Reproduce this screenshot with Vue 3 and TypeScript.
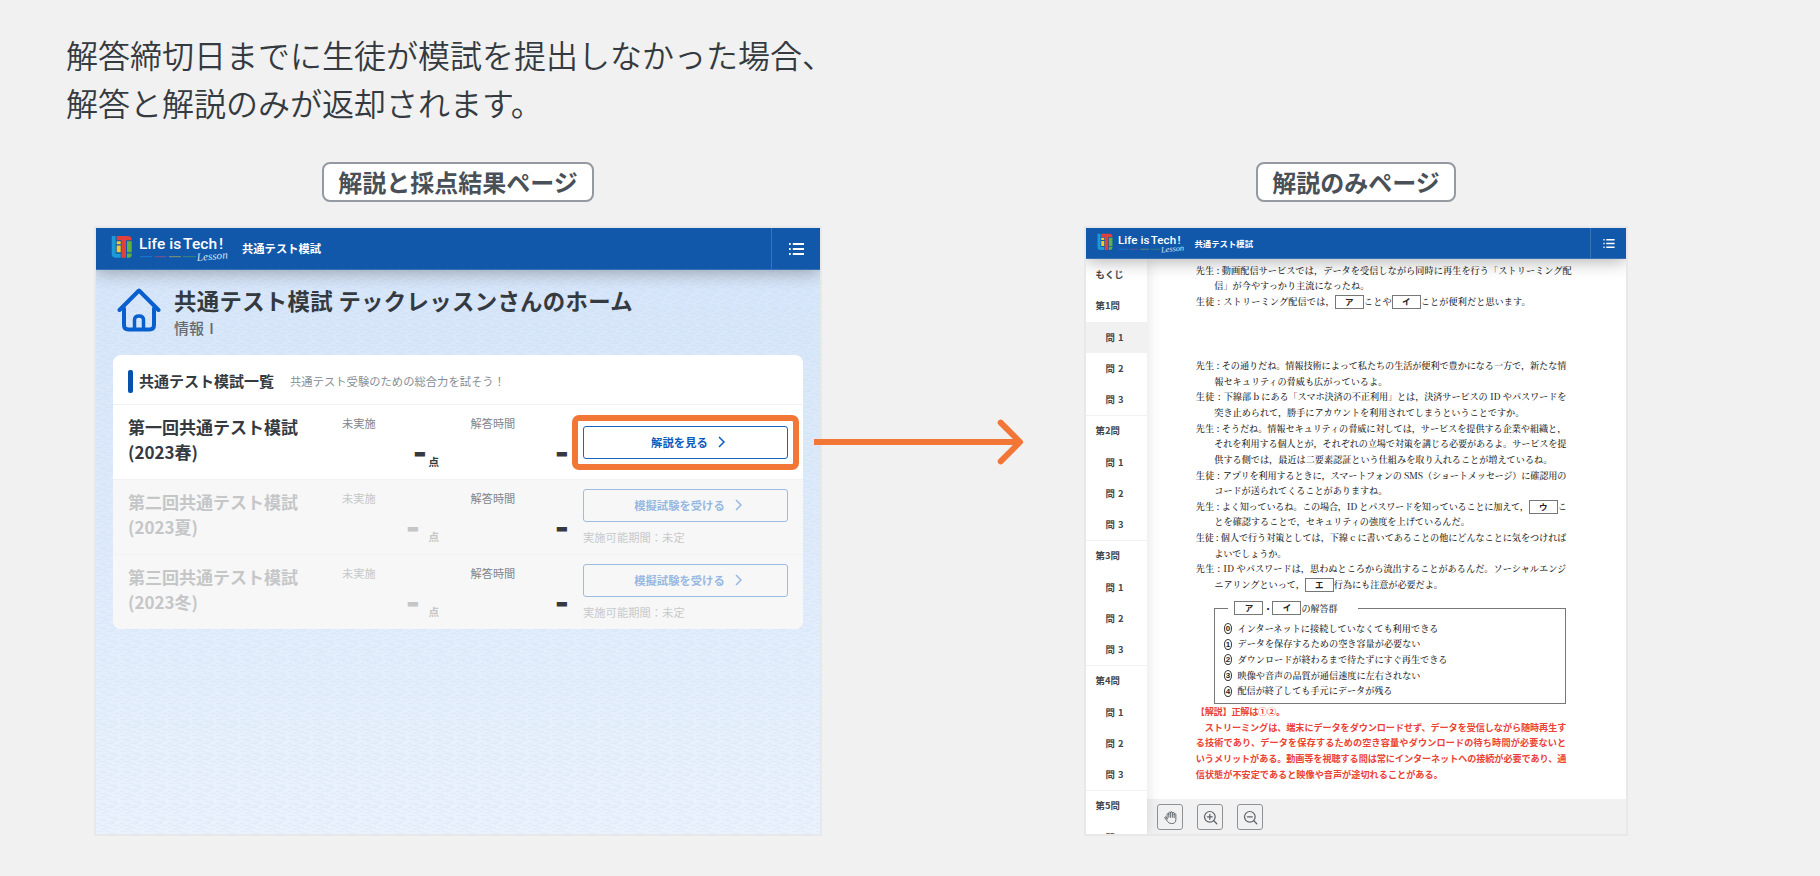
<script setup lang="ts">
interface Seg { t: string; w: number; blank?: boolean }
interface Line { pad: number; segs: Seg[] }

const fit = (el: HTMLElement, width: number) => {
  el.style.letterSpacing = '0px'
  const natural = el.getBoundingClientRect().width
  const count = Array.from(el.textContent ?? '').length
  if (count > 0) el.style.letterSpacing = `${(width - natural) / count}px`
}
const vFit = {
  mounted: (el: HTMLElement, binding: { value: number }) => fit(el, binding.value),
}

const s = (t: string, w: number): Seg => ({ t, w })
const b = (t: string): Seg => ({ t, w: 29, blank: true })
const full = (who: string, gap: number, t: string, w: number): Line => ({ pad: 0, segs: [s(who + ' : ', gap), s(t, w)] })
const cont = (t: string, w: number): Line => ({ pad: 18.5, segs: [s(t, w)] })

const intro: Line[] = [
  full('先生', 26, '動画配信サービスでは，データを受信しながら同時に再生を行う「ストリーミング配', 350),
  cont('信」が今やすっかり主流になったね。', 155),
  { pad: 0, segs: [s('生徒 : ', 27.5), s('ストリーミング配信では，', 111.5), b('ア'), s('ことや', 28), b('イ'), s('ことが便利だと思います。', 110)] },
]
const talk: Line[] = [
  full('先生', 26, 'その通りだね。情報技術によって私たちの生活が便利で豊かになる一方で，新たな情', 344.5),
  cont('報セキュリティの脅威も広がっているよ。', 173),
  full('生徒', 28, '下線部 b にある「スマホ決済の不正利用」とは，決済サービスの ID やパスワードを', 342.5),
  cont('突き止められて，勝手にアカウントを利用されてしまうということですか。', 310),
  full('先生', 26, 'そうだね。情報セキュリティの脅威に対しては，サービスを提供する企業や組織と，', 344.5),
  cont('それを利用する個人とが，それぞれの立場で対策を講じる必要があるよ。サービスを提', 352),
  cont('供する側では，最近は二要素認証という仕組みを取り入れることが増えているね。', 338),
  full('生徒', 27, 'アプリを利用するときに，スマートフォンの SMS（ショートメッセージ）に確認用の', 343.5),
  cont('コードが送られてくることがありますね。', 173),
  { pad: 0, segs: [s('先生 : ', 26), s('よく知っているね。この場合，ID とパスワードを知っていることに加えて，', 307), b('ウ'), s('こ', 8.5)] },
  cont('とを確認することで，セキュリティの強度を上げているんだ。', 255.5),
  full('生徒', 25, '個人で行う対策としては，下線 c に書いてあることの他にどんなことに気をつければ', 345.5),
  cont('よいでしょうか。', 72),
  full('先生', 27.5, 'ID やパスワードは，思わぬところから流出することがあるんだ。ソーシャルエンジ', 343),
  { pad: 18.5, segs: [s('ニアリングといって，', 90.5), b('エ'), s('行為にも注意が必要だよ。', 109)] },
]
const options: Seg[] = [
  s('インターネットに接続していなくても利用できる', 201),
  s('データを保存するための空き容量が必要ない', 183),
  s('ダウンロードが終わるまで待たずにすぐ再生できる', 210),
  s('映像や音声の品質が通信速度に左右されない', 183),
  s('配信が終了しても手元にデータが残る', 155),
]
const notes: Line[] = [
  { pad: 0, segs: [s('【解説】正解は①②。', 89)] },
  { pad: 9, segs: [s('ストリーミングは、端末にデータをダウンロードせず、データを受信しながら随時再生す', 361.5)] },
  { pad: 0, segs: [s('る技術であり、データを保存するための空き容量やダウンロードの待ち時間が必要ないと', 370.5)] },
  { pad: 0, segs: [s('いうメリットがある。動画等を視聴する間は常にインターネットへの接続が必要であり、通', 370.5)] },
  { pad: 0, segs: [s('信状態が不安定であると映像や音声が途切れることがある。', 247)] },
]
const sections = [
  { n: 1, q: 3 },
  { n: 2, q: 3 },
  { n: 3, q: 3 },
  { n: 4, q: 3 },
  { n: 5, q: 1 },
]
const exams = [
  { name: '第一回共通テスト模試', term: '(2023春)', open: true, action: '解説を見る', w: 57 },
  { name: '第二回共通テスト模試', term: '(2023夏)', open: false, action: '模擬試験を受ける', w: 90.5 },
  { name: '第三回共通テスト模試', term: '(2023冬)', open: false, action: '模擬試験を受ける', w: 90.5 },
]
const windows = ['home', 'paper']
</script>

<template>
  <main class="slide">
    <p class="lead">解答締切日までに生徒が模試を提出しなかった場合、<br />解答と解説のみが返却されます。</p>

    <div class="stage">
      <section v-for="kind in windows" :key="kind" class="column" :class="kind">
        <h2 class="badge">{{ kind === 'home' ? '解説と採点結果ページ' : '解説のみページ' }}</h2>
        <div class="window">
          <header class="bar">
            <svg class="brand" viewBox="0 0 120 28">
              <path d="M.7 1h4v17.700h5v4H4.700q-4 0-4-4z" fill="#1b9ad6" />
              <path d="M5.700 1h11q4 0 4 4.300H15v17.400h-4.500V5.300H5.700z" fill="#e2403a" />
              <path d="M5.700 6.300h4v3h-4zM5.700 10.500h4v6.800h-4z" fill="#f6c927" />
              <path d="M16 6.300h4.700v11H16zM16 18.500h4.700v1q0 3.200-3.200 3.200H16z" fill="#5fb23c" />
              <text x="28" y="14" class="brand-name" textLength="84" lengthAdjust="spacing">Life is&#8202;Tech&#8202;!</text>
              <path d="M29 21.700h12" stroke="#1b7fd2" stroke-width=".9" />
              <path d="M43.500 21.700h12" stroke="#8d4f82" stroke-width=".9" />
              <path d="M58 21.700h12" stroke="#8f9d63" stroke-width=".9" />
              <path d="M72 21.700h13" stroke="#3f8f6b" stroke-width=".9" />
              <text x="86" y="26" class="brand-sub" textLength="31" lengthAdjust="spacingAndGlyphs" transform="rotate(-5 86 25)">Lesson</text>
            </svg>
            <span class="service">共通テスト模試</span>
            <span class="menu">
              <svg viewBox="0 0 15 12"><path d="M0 1h1.700M0 6h1.700M0 11h1.700M3.800 1H15M3.800 6H15M3.800 11H15" stroke="#fff" stroke-width="1.900" /></svg>
            </span>
          </header>

          <div v-if="kind === 'home'" class="home-body">
            <svg class="texture" width="100%" height="100%">
              <defs>
                <pattern id="waves" width="24" height="16" patternUnits="userSpaceOnUse">
                  <path d="M0 1.500h7M9 1.500h4M12 3.500h9M2 5.500h8M18 5.500h5M6 7.500h5M13 7.500h6M0 9.500h4M10 9.500h8M3 11.500h7M19 11.500h5M0 13.500h3M9 13.500h7M5 15.500h6M17 15.500h5" stroke="#b9d3f2" stroke-width="1.400" opacity=".22" />
                </pattern>
              </defs>
              <rect width="100%" height="100%" fill="url(#waves)" />
            </svg>
            <div class="hero">
              <svg class="house" viewBox="0 0 44 44" fill="none" stroke="#0860d0" stroke-width="4" stroke-linejoin="round" stroke-linecap="round">
                <path d="M2.500 22 22 2.500 41.500 22M7 20.500v16.500q0 4.500 4.500 4.500h21q4.500 0 4.500-4.500V20.500" />
                <path d="M17.500 41V32q0-4 4.500-4t4.500 4v9" stroke-width="3.500" />
              </svg>
              <div>
                <h1><span v-fit="459">共通テスト模試 テックレッスンさんのホーム</span></h1>
                <p>情報Ⅰ</p>
              </div>
            </div>
            <div class="card">
              <div class="card-head">
                <i></i>
                <h3>共通テスト模試一覧</h3>
                <span v-fit="215">共通テスト受験のための総合力を試そう！</span>
              </div>
              <div v-for="e in exams" :key="e.term" class="exam" :class="{ closed: !e.open }">
                <div class="exam-name">{{ e.name }}<br />{{ e.term }}</div>
                <div class="score">
                  <span class="label state">未実施</span>
                  <div class="value"><b>-</b><small>点</small></div>
                </div>
                <div class="time">
                  <span class="label">解答時間</span>
                  <div class="value"><b>-</b></div>
                </div>
                <div class="action">
                  <span class="button">
                    <span v-fit="e.w">{{ e.action }}</span>
                    <svg viewBox="0 0 7 12"><path d="M1 1l5 5-5 5" fill="none" stroke="currentColor" stroke-width="1.500" /></svg>
                    <span v-if="e.open" class="highlight"></span>
                  </span>
                  <span v-if="!e.open" class="period">実施可能期間：未定</span>
                </div>
              </div>
            </div>
          </div>

          <div v-else class="paper-body">
            <nav>
              <div class="item">もくじ</div>
              <div v-for="g in sections" :key="g.n" class="group">
                <div class="item">第{{ g.n }}問</div>
                <div v-for="q in g.q" :key="q" class="item sub" :class="{ current: g.n === 1 && q === 1 }">問 {{ q }}</div>
              </div>
            </nav>
            <div class="viewer">
              <div class="sheet">
                <div class="block intro">
                  <div v-for="(l, i) in intro" :key="i" class="line" :style="{ paddingLeft: l.pad + 'px' }">
                    <template v-for="(g, j) in l.segs" :key="j">
                      <span v-if="g.blank" class="blank">{{ g.t }}</span><span v-else v-fit="g.w" class="seg">{{ g.t }}</span>
                    </template>
                  </div>
                </div>
                <div class="block talk">
                  <div v-for="(l, i) in talk" :key="i" class="line" :style="{ paddingLeft: l.pad + 'px' }">
                    <template v-for="(g, j) in l.segs" :key="j">
                      <span v-if="g.blank" class="blank">{{ g.t }}</span><span v-else v-fit="g.w" class="seg">{{ g.t }}</span>
                    </template>
                  </div>
                </div>
                <div class="choices">
                  <div class="legend"><span class="blank">ア</span><em>・</em><span class="blank">イ</span><span v-fit="36" class="seg">の解答群</span></div>
                  <div v-for="(o, i) in options" :key="i" class="line">
                    <span class="num">{{ i }}</span><span v-fit="o.w" class="seg">{{ o.t }}</span>
                  </div>
                </div>
                <div class="block notes">
                  <div v-for="(l, i) in notes" :key="i" class="line" :style="{ paddingLeft: l.pad + 'px' }">
                    <span v-for="(g, j) in l.segs" :key="j" v-fit="g.w" class="seg">{{ g.t }}</span>
                  </div>
                </div>
              </div>
              <div class="tools">
                <span class="tool">
                  <svg viewBox="0 0 16 16"><path d="M4.300 9.500V4.700a.9.9 0 0 1 1.900 0V3.200a.95.95 0 0 1 1.900 0v-.4a.95.95 0 0 1 1.900 0v.7a.95.95 0 0 1 1.900 0v1.300a.9.9 0 0 1 1.800 0v5.400q0 4.300-4.500 4.300-3 0-4.200-2.200L2 8.600q-.3-1.300.8-1.300.8 0 1.500 2.200M6.200 4.500v3.300M8.100 3.200v4.600M10 3.500v4.300M11.900 4.500v3.600" stroke-width="1" /></svg>
                </span>
                <span class="tool">
                  <svg viewBox="0 0 16 16"><circle cx="7.300" cy="7.300" r="5.700" /><path d="M11.500 11.500l3.200 3.200M4.700 7.300h5.200M7.300 4.700v5.200" /></svg>
                </span>
                <span class="tool">
                  <svg viewBox="0 0 16 16"><circle cx="7.300" cy="7.300" r="5.700" /><path d="M11.500 11.500l3.200 3.200M4.700 7.300h5.200" /></svg>
                </span>
              </div>
            </div>
          </div>
        </div>
      </section>

      <svg class="arrow" viewBox="0 0 210 46" fill="none" stroke="#f27737" stroke-width="6">
        <path d="M0 23H205" />
        <path d="M186.700 3.700 206 23 186.700 42.300" stroke-linecap="round" stroke-linejoin="round" />
      </svg>
    </div>
  </main>
</template>

<style>
body { margin: 0; background: #f1f1f1; }
</style>

<style scoped>
* { box-sizing: border-box; }
h1, h2, h3, p { margin: 0; }
.slide {
  width: 1820px; height: 876px; padding-top: 30px; overflow: hidden; background: #f1f1f1;
  font-family: "Noto Sans CJK JP", sans-serif; color: #343a40; white-space: nowrap;
}
.lead { padding-left: 66px; font-size: 32px; line-height: 48px; font-weight: 350; }
.stage { position: relative; display: flex; gap: 262px; padding: 36px 0 0 94px; }
.column { display: flex; flex-direction: column; align-items: center; gap: 24px; }
.home { width: 728px; }
.paper { width: 544px; }
.badge {
  height: 40px; padding: 0 14px; border: 2px solid #939aa2; border-radius: 8px; background: #fff;
  color: #495057; font-size: 24px; line-height: 35px; font-weight: 700;
}
.window { width: 100%; height: 610px; border: 2px solid #e7e8e9; overflow: hidden; display: flex; flex-direction: column; }
.bar {
  position: relative; z-index: 2; flex: none; display: flex; align-items: center; height: 42px; padding-left: 15px;
  background: #1158ab; border-bottom: 1px solid #356fb6; box-shadow: 0 2px 18px rgba(0, 0, 0, .32); color: #fff;
}
.brand { width: 120px; height: 28px; flex: none; }
.brand-name { font: 500 15.500px Roboto, sans-serif; fill: #fff; }
.brand-sub { font: italic 11px "Liberation Serif", serif; fill: #d5e3f4; }
.service { margin-left: 11px; margin-top: -1px; font-size: 11.300px; font-weight: 700; }
.menu { margin-left: auto; width: 49px; height: 100%; border-left: 1px solid #3a73b8; display: flex; align-items: center; justify-content: center; }
.menu svg { width: 15px; height: 12px; }
.paper .bar { height: 31px; padding-left: 11px; }
.paper .brand { width: 89.500px; height: 21px; }
.paper .service { margin-left: 8px; font-size: 8.400px; }
.paper .menu { width: 36px; }
.paper .menu svg { width: 12px; height: 9px; }

.home-body { position: relative; flex: 1; background: linear-gradient(#d7e6f9, #dfebfb 50%, #ebf2fc); }
.texture { position: absolute; inset: 0; }
.hero { position: relative; display: flex; gap: 13px; padding: 18px 0 0 21px; height: 85px; }
.house { width: 44px; height: 44px; flex: none; }
.hero h1 { font-size: 22.400px; line-height: 26px; margin-top: -1px; font-weight: 700; }
.hero p { font-size: 15px; line-height: 20px; margin-top: 5px; font-weight: 500; color: #666b70; }
.hero h1 span { display: inline-block; }
.card { position: relative; width: 690px; margin-left: 17px; border-radius: 8px; background: #fff; }
.card-head { display: flex; align-items: center; height: 49px; padding: 4px 0 0 15px; }
.card-head i { width: 5px; height: 23px; border-radius: 2px; background: #0552ad; margin-right: 6px; }
.card-head h3 { margin-top: -1px; font-size: 15px; font-weight: 700; line-height: 20px; }
.card-head span { margin: -1px 0 0 16px; font-size: 11.300px; color: #868e96; }
.exam {
  display: grid; grid-template-columns: 214px 127.500px 112.500px 205px; height: 75px; padding-left: 16px;
  border-top: 1px solid #f1f2f3;
}
.exam:last-child { border-radius: 0 0 8px 8px; }
.exam-name { margin-left: -1px; padding-top: 9px; font-size: 17px; line-height: 25px; font-weight: 700; }
.label { display: block; padding-top: 10px; font-size: 11.200px; line-height: 16px; color: #7f868d; }
.state { margin-left: -1px; }
.value { display: flex; justify-content: flex-end; height: 30px; margin-top: 6px; }
.value b { font: 900 30px/30px Inter, sans-serif; }
.value small { margin-left: 1.500px; padding-top: 17px; font-size: 10.500px; line-height: 16px; font-weight: 700; }
.score .value { padding-right: 31.500px; }
.time .value { padding-right: 14px; }
.action { display: flex; flex-direction: column; padding-top: 21px; }
.button {
  position: relative; flex: none; display: flex; align-items: center; justify-content: center; gap: 10px; height: 33px; padding: 0 0 1px 5px;
  border: 1px solid #1a64bf; border-radius: 3px; background: #fff; color: #0d5bbd; font-size: 11.300px; font-weight: 700;
}
.button svg { width: 7px; height: 12px; }
.highlight { position: absolute; inset: -12px; border: 6px solid #f27737; border-radius: 7px; }
.period { padding-top: 7px; font-size: 11.300px; line-height: 16px; color: #c8cacb; }
.closed { background: #f7f7f7; }
.closed .exam-name, .closed .score .value { color: #c5c6c7; }
.closed .state { color: #c5c8ca; }
.closed .value small { margin-left: 8.500px; }
.closed .action { padding-top: 9px; }
.closed .button { background: #f7f7f7; border-color: #9cbce3; color: #97b8e1; }

.paper-body { flex: 1; display: flex; min-height: 0; background: #fff; }
nav { position: relative; z-index: 1; width: 60.500px; flex: none; overflow: hidden; background: #fff; box-shadow: 0 0 14px rgba(0, 0, 0, .12); clip-path: inset(0 -20px 0 0); }
.item { height: 31.250px; padding: 0 0 1px 9.500px; line-height: 30px; font-size: 9.400px; font-weight: 700; color: #43474c; }
.sub { padding-left: 19.500px; word-spacing: 1px; }
.current { background: #f1f1f1; }
.group + .group { box-shadow: inset 0 1px #f0f1f2; }
.viewer { flex: 1; display: flex; flex-direction: column; min-width: 0; }
.sheet { flex: 1; padding: 3.600px 0 0 49.300px; font-family: "Noto Serif CJK JP", "Noto Sans CJK JP", "Liberation Serif", serif; font-size: 9.150px; font-weight: 500; color: #222; }
.line { display: flex; align-items: center; height: 15.650px; line-height: 15.650px; }
.seg { display: inline-block; flex: none; white-space: pre; }
.talk { margin-top: 48.500px; }
.blank {
  flex: none; display: inline-block; width: 29px; height: 14px; border: 1px solid #777; text-align: center;
  font: 700 8.500px/11px "Noto Sans CJK JP", sans-serif;
}
.choices { width: 352.500px; height: 96px; margin: 15.200px 0 0 18.200px; padding: 0 0 0 9px; border: 1px solid #777; }
.legend { display: flex; align-items: center; width: 130px; height: 14px; margin: -8px 0 6px 4px; padding-left: 6.500px; background: #fff; }
.legend em { width: 9px; font-style: normal; font-weight: 700; text-align: center; }
.num { width: 8px; height: 11px; margin-right: 5.500px; border: 1px solid #333; border-radius: 50%; font: 700 8px/9px "Liberation Sans", sans-serif; text-align: center; }
.notes { margin-top: .3px; font-family: "Noto Sans CJK JP", sans-serif; font-weight: 700; color: #ea4335; }
.tools { flex: none; display: flex; gap: 14px; height: 35px; padding: 5px 0 0 10.500px; background: #f1f1f1; }
.tool { display: grid; place-items: center; width: 26px; height: 26px; border: 1px solid #8d9299; border-radius: 3px; }
.tool svg { width: 15px; height: 15px; fill: none; stroke: #5d636b; stroke-width: 1.300; stroke-linecap: round; stroke-linejoin: round; }
.arrow { position: absolute; left: 814px; top: 293px; width: 210px; height: 46px; }
</style>
